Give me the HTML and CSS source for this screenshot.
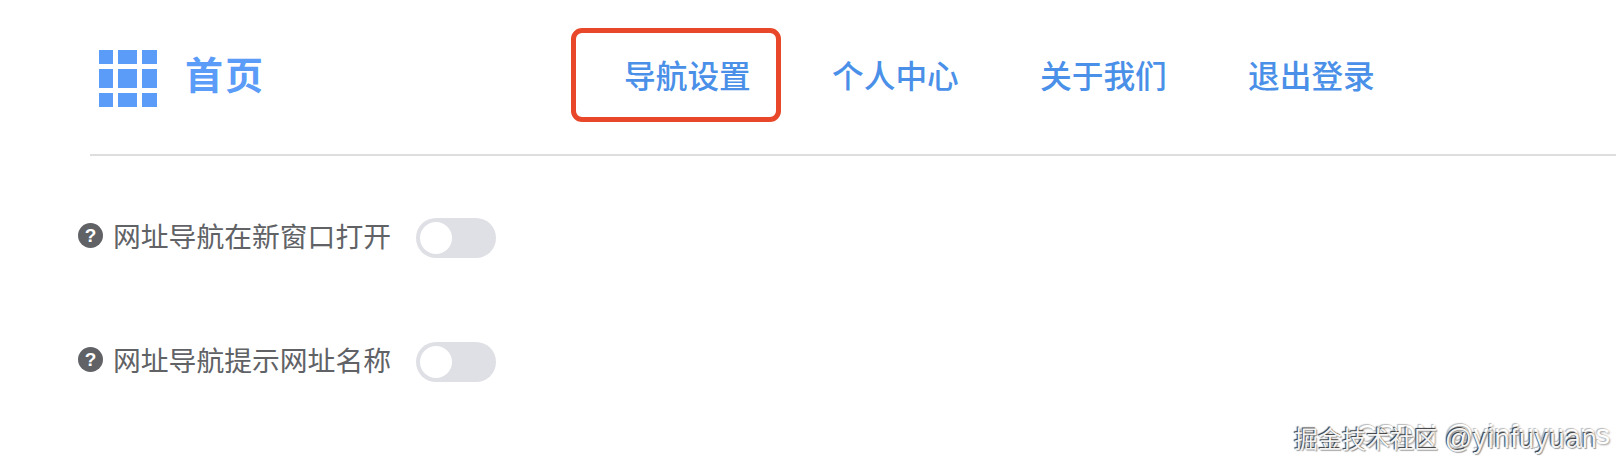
FILE: index.html

```html
<!DOCTYPE html>
<html lang="zh-CN">
<head>
  <meta charset="UTF-8">
  <title>导航设置</title>
  <link rel="stylesheet" href="styles.css">
</head>
<body>

  <header class="top-bar">
    <a class="brand">
      <svg class="brand-icon" width="58" height="57" viewBox="0 0 58 57">
        <path d="M0 0h14v14H0zM19 0h19v14H19zM43 0h15v14H43zM0 19h14v19H0zM19 19h19v19H19zM43 19h15v19H43zM0 43h14v14H0zM19 43h19v14H19zM43 43h15v14H43z"/>
      </svg>
      <span class="brand-name">首页</span>
    </a>
    <nav class="nav-links">
      <a class="nav-link nav-link-marked">导航设置</a>
      <a class="nav-link">个人中心</a>
      <a class="nav-link">关于我们</a>
      <a class="nav-link">退出登录</a>
    </nav>
  </header>

  <div class="settings">
    <div class="setting-row">
      <span class="help-icon">?</span>
      <span class="setting-label">网址导航在新窗口打开</span>
      <span class="switch"><span class="switch-knob"></span></span>
    </div>
    <div class="setting-row">
      <span class="help-icon">?</span>
      <span class="setting-label">网址导航提示网址名称</span>
      <span class="switch"><span class="switch-knob"></span></span>
    </div>
  </div>

  <div class="watermark-back">CSDN @yinfuyuans</div>
  <div class="watermark">掘金技术社区 <span class="watermark-name">@yinfuyuan</span></div>

</body>
</html>
```

FILE: styles.css

```css
body {
  margin: 0;
  height: 466px;
  overflow: hidden;
  background: #ffffff;
  position: relative;
  font-family: "Liberation Sans", "Noto Sans CJK SC", sans-serif;
}

.top-bar {
  display: flex;
  align-items: flex-start;
  height: 154px;
  margin-left: 90px;
  border-bottom: 2px solid #dedede;
}

.brand {
  display: flex;
  align-items: center;
  gap: 28px;
  margin: 50px 0 0 9px;
  height: 57px;
  color: #5a9cf8;
}

.brand-icon {
  fill: #5a9cf8;
}

.brand-name {
  margin-bottom: 12px;
  font-size: 38px;
  font-weight: 700;
  letter-spacing: 2px;
}

.nav-links {
  display: flex;
  margin: 28px 1px 0 306px;
}

.nav-link {
  box-sizing: border-box;
  height: 94px;
  width: 208px;
  padding: 2px 0 0 53px;
  font-size: 31.7px;
  font-weight: 500;
  line-height: 94px;
  color: #4a90e8;
  white-space: nowrap;
}

.nav-link-marked {
  width: 210px;
  margin-right: -2px;
  border: 5px solid #e8472a;
  border-radius: 11px;
  padding-left: 48px;
  line-height: 84px;
}

.settings {
  display: flex;
  flex-direction: column;
  gap: 82px;
  margin: 61px 0 0 78px;
}

.setting-row {
  display: flex;
  align-items: center;
  height: 42px;
}

.help-icon {
  width: 25px;
  height: 25px;
  margin-bottom: 6px;
  border-radius: 50%;
  background: #606266;
  color: #ffffff;
  font-size: 19px;
  font-weight: bold;
  line-height: 25px;
  text-align: center;
}

.setting-label {
  margin: 0 0 7px 10px;
  font-size: 27.8px;
  color: #606266;
  white-space: nowrap;
}

.switch {
  display: flex;
  align-items: center;
  box-sizing: border-box;
  width: 80px;
  height: 40px;
  margin-left: 25px;
  padding-left: 4px;
  border-radius: 20px;
  background: #dfe0e5;
}

.switch-knob {
  width: 32px;
  height: 32px;
  border-radius: 50%;
  background: #ffffff;
}

.watermark,
.watermark-back {
  position: absolute;
  white-space: nowrap;
}

.watermark {
  left: 1294px;
  top: 420px;
  font-size: 24px;
  color: #f4f4f4;
  text-shadow: -1px -1px 1px #333333, 1px 1px 1px #999999;
}

.watermark-name {
  font-size: 27px;
  letter-spacing: 1px;
}

.watermark-back {
  right: 6px;
  top: 418px;
  font-size: 28.5px;
  color: #ffffff;
  text-shadow: 1px 1px 2px #999999, -1px -1px 1px #bbbbbb;
}
```
